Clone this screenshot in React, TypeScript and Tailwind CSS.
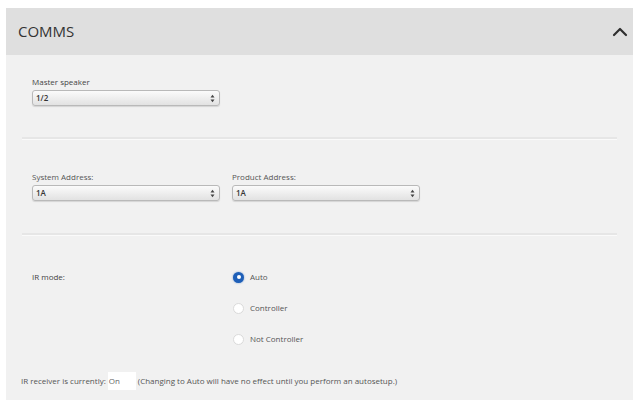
import { ChevronUp } from "lucide-react";

const Select = ({ value, width = "w-[188px]" }: { value: string; width?: string }) => (
  <div
    className={`flex h-[16px] ${width} items-center justify-between rounded-[3px] border border-[#b9b9b9] bg-gradient-to-b from-[#fbfbfb] to-[#e2e2e2] pl-[3px] pr-[4px] shadow-[0_1px_1px_rgba(0,0,0,0.12)]`}
  >
    <span className="text-[8px] font-semibold text-[#333]">{value}</span>
    <svg width="5" height="9" viewBox="0 0 5 9">
      <path d="M0.5 3.5 L2.5 0.8 L4.5 3.5 Z" fill="#444" />
      <path d="M0.5 5.5 L2.5 8.2 L4.5 5.5 Z" fill="#444" />
    </svg>
  </div>
);

const Radio = ({ label, checked = false }: { label: string; checked?: boolean }) => (
  <div className="flex items-center gap-[6px]">
    {checked ? (
      <span className="flex h-[11px] w-[11px] items-center justify-center rounded-full bg-[#1e5fb8] shadow-[0_0_2px_rgba(30,95,184,0.6)]">
        <span className="h-[4px] w-[4px] rounded-full bg-white" />
      </span>
    ) : (
      <span className="h-[11px] w-[11px] rounded-full border border-[#dadada] bg-white" />
    )}
    <span className="text-[8px] text-[#555]">{label}</span>
  </div>
);

const Divider = () => <div className="mx-[16px] h-[2px] bg-[#e6e6e6] shadow-[0_1px_0_#fafafa]" />;

export default function App() {
  return (
    <div className="h-[409px] w-[640px] bg-white pl-[6px] pr-[7px] pt-[8px]" style={{ fontFamily: "'Open Sans', sans-serif" }}>
      <div className="flex h-[392px] flex-col bg-[#f1f1f1]">
        <div className="flex h-[47px] items-center justify-between bg-[#dfdfdf] pl-[12px] pr-[1px]">
          <span className="text-[15px] text-[#333]">COMMS</span>
          <ChevronUp size={24} strokeWidth={2.2} className="text-[#2f2f2f]" />
        </div>

        <div className="flex flex-col gap-[2px] px-[26px] pt-[21px]">
          <span className="text-[8px] text-[#444]">Master speaker</span>
          <Select value="1/2" />
        </div>

        <div className="mt-[31px]">
          <Divider />
        </div>

        <div className="flex gap-[12px] px-[26px] pt-[32px]">
          <div className="flex flex-col gap-[2px]">
            <span className="text-[8px] text-[#555]">System Address:</span>
            <Select value="1A" />
          </div>
          <div className="flex flex-col gap-[2px]">
            <span className="text-[8px] text-[#555]">Product Address:</span>
            <Select value="1A" />
          </div>
        </div>

        <div className="mt-[32px]">
          <Divider />
        </div>

        <div className="flex px-[26px] pt-[36px]">
          <span className="w-[201px] text-[8px] text-[#444]">IR mode:</span>
          <div className="flex flex-col gap-[19px] pt-[0px]">
            <Radio label="Auto" checked />
            <Radio label="Controller" />
            <Radio label="Not Controller" />
          </div>
        </div>

        <div className="flex items-center pl-[15px] pt-[27px] text-[8px] text-[#555]">
          <span>IR receiver is currently:</span>
          <span className="ml-[2px] w-[28px] bg-white px-[1px] py-[3px] text-[#666]">On</span>
          <span className="ml-[2px]">(Changing to Auto will have no effect until you perform an autosetup.)</span>
        </div>
      </div>
    </div>
  );
}
